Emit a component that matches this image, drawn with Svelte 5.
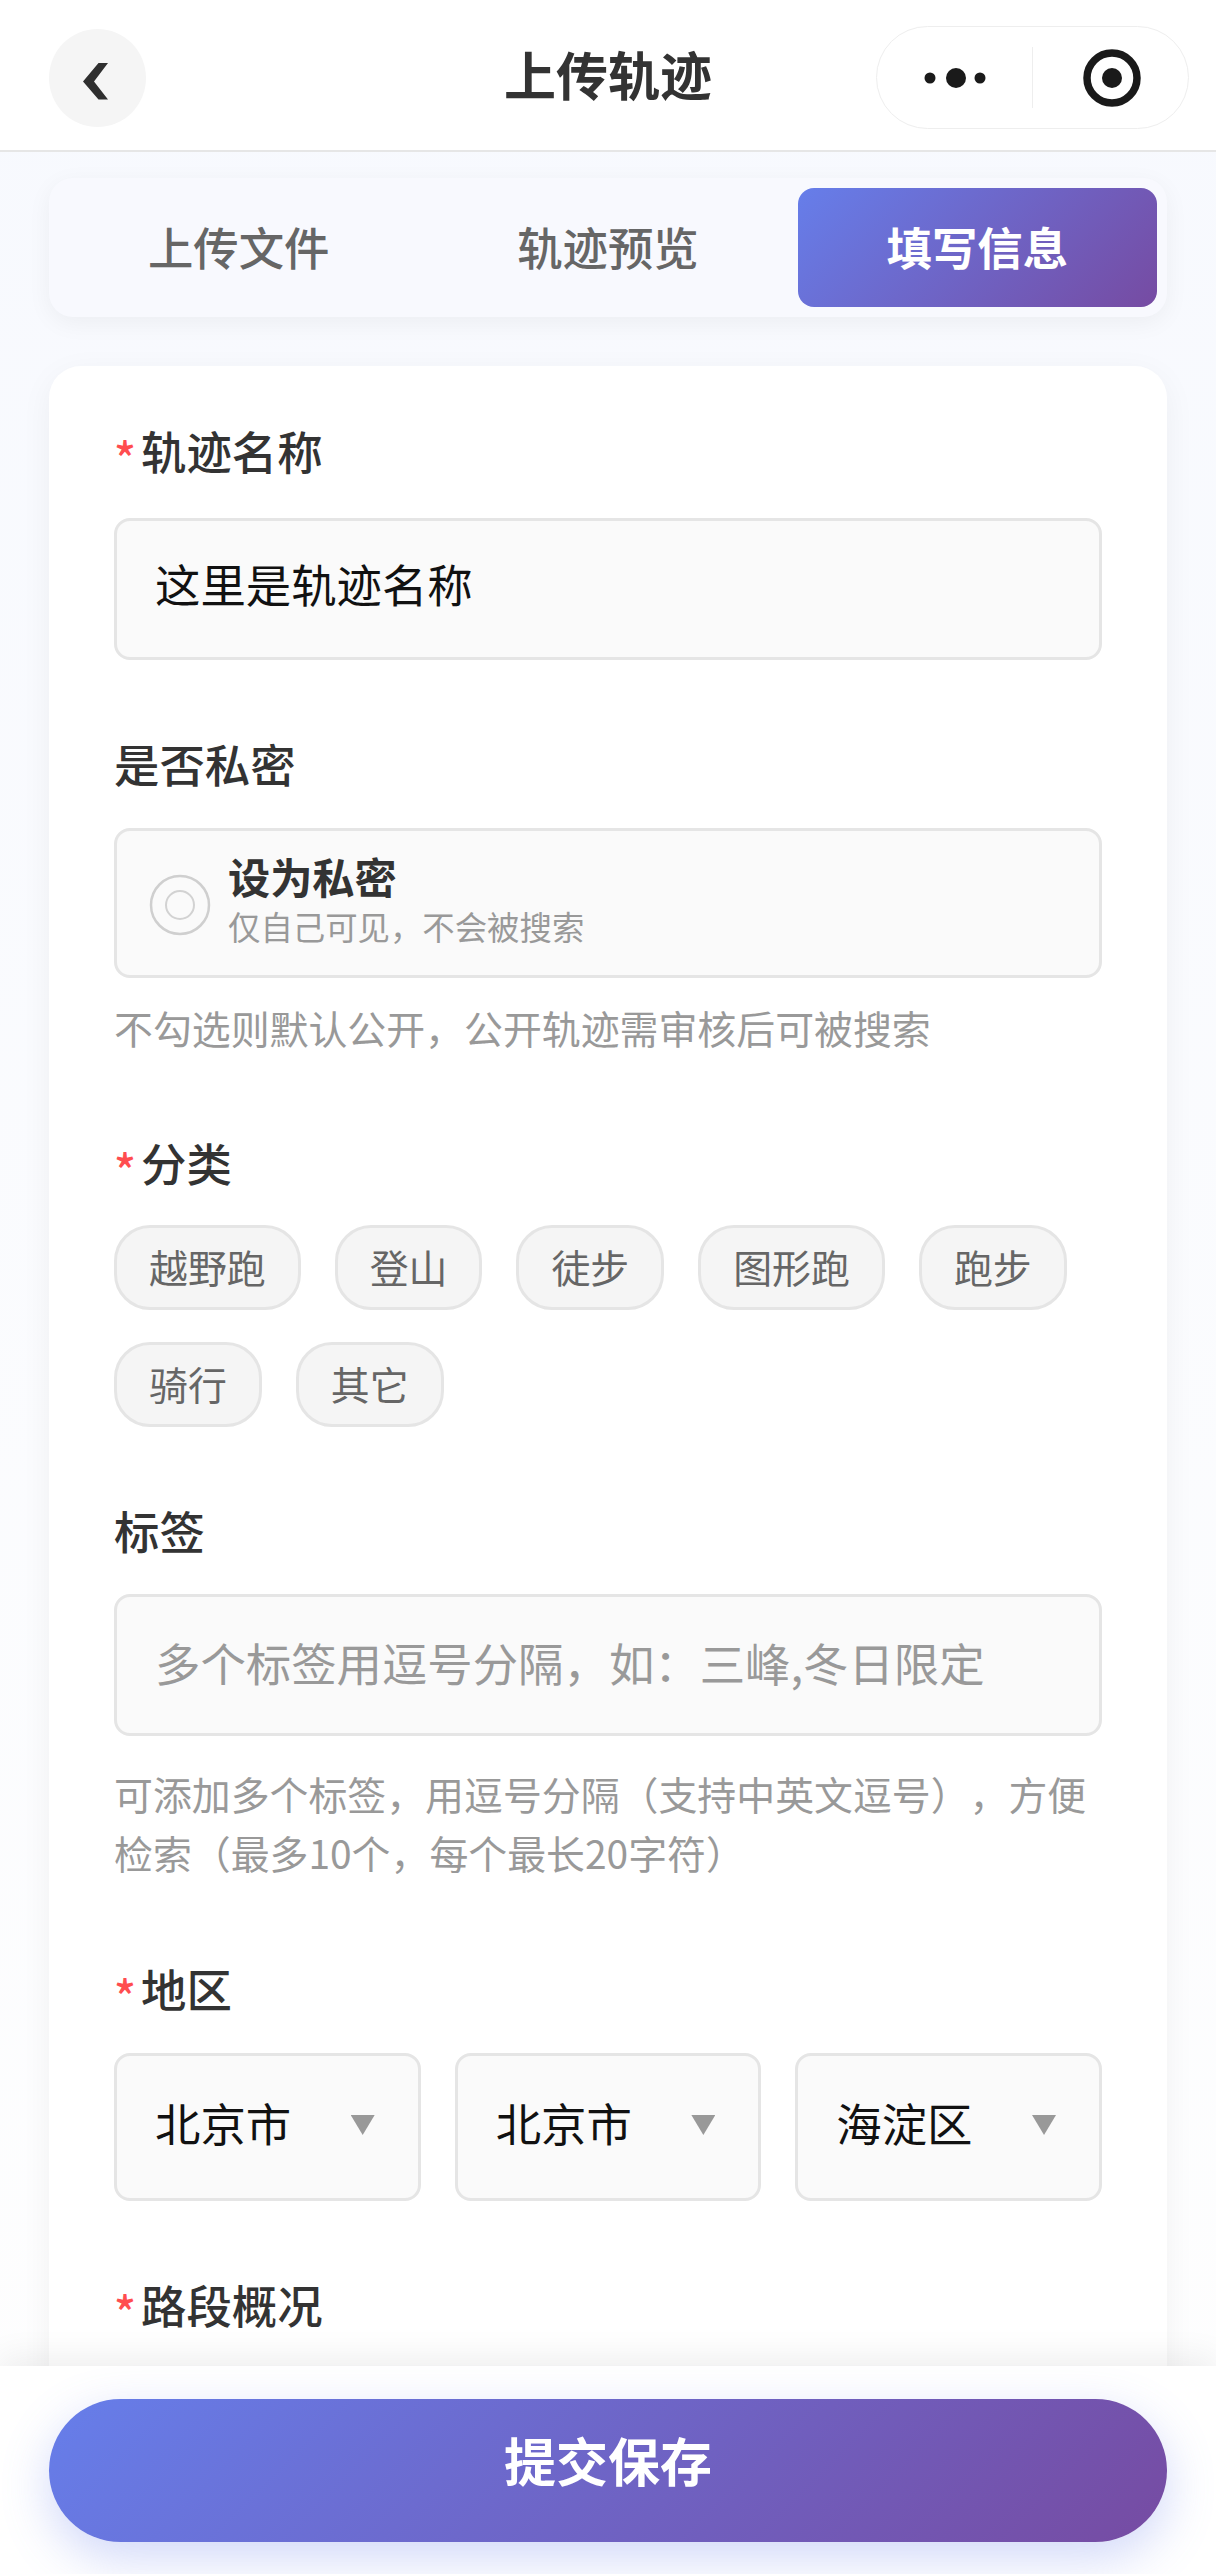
<script>
  const tabs = [
    { name: '上传文件', active: false },
    { name: '轨迹预览', active: false },
    { name: '填写信息', active: true }
  ];
  const categories = ['越野跑', '登山', '徒步', '图形跑', '跑步', '骑行', '其它'];
  const regions = ['北京市', '北京市', '海淀区'];
</script>

<div class="page">
  <header class="nav">
    <button class="back" aria-label="返回">
      <svg width="28" height="38" viewBox="0 0 28 38"><path d="M25 0H15.500L0 18.500L15.500 36.500H25L11 18.500Z" fill="#2f2f2f" /></svg>
    </button>
    <h1 class="title">上传轨迹</h1>
    <div class="capsule">
      <div class="cap-side">
        <svg width="62" height="22" viewBox="0 0 62 22"><circle cx="6" cy="11" r="5.500" fill="#1a1a1a" /><circle cx="32" cy="11" r="10" fill="#1a1a1a" /><circle cx="56" cy="11" r="5.500" fill="#1a1a1a" /></svg>
      </div>
      <div class="cap-side target">
        <svg width="58" height="58" viewBox="0 0 58 58"><circle cx="29" cy="29" r="25" fill="none" stroke="#1a1a1a" stroke-width="7.500" /><circle cx="29" cy="29" r="10" fill="#1a1a1a" /></svg>
      </div>
    </div>
  </header>

  <main class="scroll">
    <nav class="tabs">
      {#each tabs as tab}
        <div class="tab" class:active={tab.active}>{tab.name}</div>
      {/each}
    </nav>

    <section class="card">
      <div class="field">
        <div class="label"><span class="star">*</span>轨迹名称</div>
        <input class="input first" type="text" value="这里是轨迹名称" readonly />
      </div>

      <div class="field">
        <div class="label">是否私密</div>
        <div class="private">
          <svg class="radio" width="62" height="64" viewBox="0 0 62 64"><circle cx="31" cy="32" r="29" fill="none" stroke="#cfcfcf" stroke-width="2.500" /><circle cx="31" cy="32" r="14" fill="none" stroke="#d2d2d2" stroke-width="2" /></svg>
          <div class="private-text">
            <div class="private-title">设为私密</div>
            <div class="private-sub">仅自己可见，不会被搜索</div>
          </div>
        </div>
        <p class="hint tight">不勾选则默认公开，公开轨迹需审核后可被搜索</p>
      </div>

      <div class="field">
        <div class="label"><span class="star">*</span>分类</div>
        <div class="chips">
          {#each categories as c}
            <span class="chip">{c}</span>
          {/each}
        </div>
      </div>

      <div class="field">
        <div class="label">标签</div>
        <input class="input tall" type="text" placeholder="多个标签用逗号分隔，如：三峰,冬日限定" readonly />
        <p class="hint">可添加多个标签，用逗号分隔（支持中英文逗号），方便检索（最多10个，每个最长20字符）</p>
      </div>

      <div class="field">
        <div class="label"><span class="star">*</span>地区</div>
        <div class="selects">
          {#each regions as r}
            <div class="select"><span>{r}</span><i class="arrow"></i></div>
          {/each}
        </div>
      </div>

      <div class="field">
        <div class="label"><span class="star">*</span>路段概况</div>
      </div>
    </section>
  </main>

  <footer class="bottom">
    <button class="submit">提交保存</button>
  </footer>
</div>

<style>
  :global(body) {
    margin: 0;
    background: #fff;
  }
  .page {
    width: 1216px;
    height: 2574px;
    display: flex;
    flex-direction: column;
    overflow: hidden;
    font-family: "Noto Sans CJK SC", "Noto Sans", sans-serif;
    color: #333;
    text-spacing-trim: space-all;
    background: linear-gradient(180deg, #f7f9fe 0%, #fefefe 100%);
  }
  .nav {
    flex: none;
    height: 150px;
    border-bottom: 2px solid #e6e6e6;
    background: #fff;
    display: flex;
    align-items: center;
    justify-content: space-between;
    padding: 0 27px 0 49px;
    position: relative;
    box-sizing: content-box;
  }
  .back {
    width: 97px;
    height: 98px;
    border: 0;
    padding: 0;
    border-radius: 50%;
    background: #f5f5f5;
    display: flex;
    align-items: center;
    justify-content: center;
    margin-top: 6px;
  }
  .back svg {
    margin-right: 2px;
    margin-top: 8px;
  }
  .title {
    position: absolute;
    left: 0;
    right: 0;
    top: 44px;
    margin: 0;
    text-align: center;
    font-size: 52px;
    line-height: 60px;
    font-weight: 700;
    color: #333;
  }
  .capsule {
    width: 313px;
    height: 103px;
    box-sizing: border-box;
    border: 1.500px solid #eeeeee;
    border-radius: 52px;
    display: flex;
    align-items: center;
    margin-top: 5px;
    position: relative;
    background: #fff;
  }
  .cap-side {
    flex: 1;
    display: flex;
    align-items: center;
    justify-content: center;
  }
  .cap-side.target {
    padding-left: 3px;
  }
  .cap-side:first-child {
    height: 61px;
    flex: 0 0 156px;
    box-sizing: border-box;
    border-right: 1.500px solid #eeeeee;
  }
  .scroll {
    flex: 1;
    min-height: 0;
    overflow: hidden;
    padding: 26px 49px 0;
  }
  .tabs {
    height: 139px;
    box-sizing: border-box;
    padding: 10px;
    display: flex;
    gap: 10px;
    border-radius: 24px;
    background: #f8f9fe;
    box-shadow: 0 6px 24px rgba(0, 0, 0, 0.05);
  }
  .tab {
    flex: 1;
    box-sizing: border-box;
    padding-bottom: 3px;
    display: flex;
    align-items: center;
    justify-content: center;
    border-radius: 16px;
    font-size: 45.400px;
    font-weight: 500;
    color: #666;
  }
  .tab.active {
    color: #fff;
    font-weight: 700;
    background: linear-gradient(135deg, #667eea 0%, #764ba2 100%);
  }
  .card {
    margin-top: 49px;
    padding: 56px 65px 0;
    background: #fff;
    border-radius: 32px;
    min-height: 2200px;
    box-shadow: 0 8px 32px rgba(0, 0, 0, 0.05);
  }
  .field {
    padding-bottom: 75px;
  }
  .label {
    height: 62px;
    box-sizing: border-box;
    padding-bottom: 6px;
    font-size: 45.400px;
    line-height: 56px;
    font-weight: 500;
    color: #333;
    margin-bottom: 31px;
    display: flex;
    align-items: center;
  }
  .star {
    color: #ff4d4f;
    width: 27px;
    flex: none;
    box-sizing: border-box;
    padding-top: 12px;
    line-height: 56px;
  }
  .input {
    display: block;
    width: 100%;
    box-sizing: border-box;
    height: 142px;
    padding: 0 38px 6px;
    border: 3px solid #e5e5e5;
    border-radius: 16px;
    background: #fafafa;
    font-family: inherit;
    font-size: 45.400px;
    color: #111;
    outline: none;
  }
  .input.first {
    margin-top: 34px;
    padding-bottom: 12px;
  }
  .input.tall {
    margin-top: -1px;
  }
  .input::placeholder {
    color: #999;
    opacity: 1;
  }
  .private {
    height: 150px;
    box-sizing: border-box;
    border: 3px solid #e5e5e5;
    border-radius: 16px;
    background: #fafafa;
    display: flex;
    align-items: center;
    padding-left: 32px;
    gap: 17px;
  }
  .private-text {
    display: flex;
    flex-direction: column;
    padding-bottom: 8px;
  }
  .radio {
    flex: none;
    margin-top: 3px;
  }
  .private-title {
    font-size: 42.200px;
    line-height: 50px;
    font-weight: 700;
    color: #333;
  }
  .private-sub {
    font-size: 32.400px;
    line-height: 42px;
    color: #999;
    margin-top: 4px;
  }
  .hint {
    margin: 28px 0 3px;
    font-size: 38.900px;
    line-height: 59px;
    color: #999;
  }
  .hint.tight {
    margin: 20px 0 3px;
    line-height: 58px;
  }
  .chips {
    display: flex;
    flex-wrap: wrap;
    gap: 32px 34px;
    margin-top: -2px;
  }
  .chip {
    height: 85px;
    box-sizing: border-box;
    padding: 0 32px;
    border: 3px solid #e5e5e5;
    border-radius: 36px;
    background: #f5f5f5;
    font-size: 38.900px;
    line-height: 76px;
    color: #666;
  }
  .selects {
    display: flex;
    gap: 34px;
    margin-top: 3px;
  }
  .select {
    flex: 1;
    height: 148px;
    box-sizing: border-box;
    padding: 0 43px 10px 38px;
    border: 3px solid #e5e5e5;
    border-radius: 16px;
    background: #fafafa;
    display: flex;
    align-items: center;
    justify-content: space-between;
    font-size: 45.400px;
    color: #111;
  }
  .arrow {
    width: 24px;
    height: 20px;
    background: #999;
    clip-path: polygon(0 0, 100% 0, 50% 100%);
    margin-top: 6px;
  }
  .bottom {
    flex: none;
    height: 208px;
    box-sizing: border-box;
    padding: 33px 49px 0;
    background: #fff;
    position: relative;
    z-index: 2;
    box-shadow: 0 -8px 32px rgba(0, 0, 0, 0.07);
  }
  .submit {
    display: block;
    width: 100%;
    height: 143px;
    border: 0;
    padding: 0 0 22px;
    border-radius: 72px;
    background: linear-gradient(135deg, #667eea 0%, #764ba2 100%);
    box-shadow: 0 16px 48px rgba(102, 126, 234, 0.3);
    font-family: inherit;
    font-size: 52px;
    font-weight: 700;
    color: #fff;
  }
</style>
